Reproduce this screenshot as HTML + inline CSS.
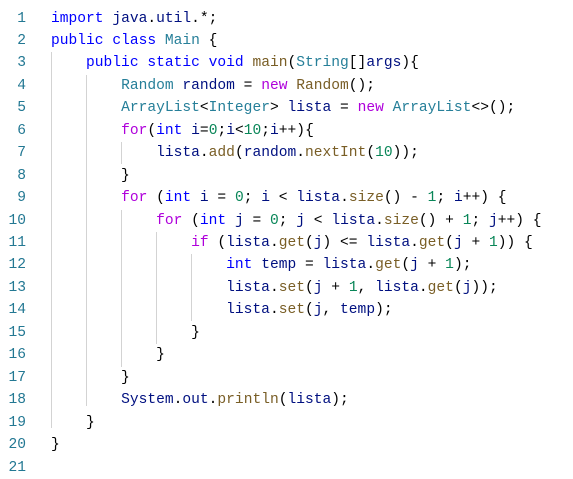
<!DOCTYPE html>
<html><head><style>
body{margin:0;background:#fff;width:573px;height:477px;overflow:hidden;font-family:"Liberation Mono",monospace;font-size:14.6px;}
.l{position:absolute;left:0;height:22.45px;line-height:22.45px;white-space:pre;}
.n{position:absolute;left:0;width:26px;text-align:right;color:#237893;}
.c{position:absolute;left:51px;color:#000;}
.k{color:#0000ff}.p{color:#af00db}.t{color:#267f99}.v{color:#001080}.f{color:#795e26}.d{color:#098658}
.g{position:absolute;width:1px;background:#d3d3d3;}
</style></head><body>
<div class="g" style="left:51px;top:52px;height:376px"></div>
<div class="g" style="left:86px;top:75px;height:331px"></div>
<div class="g" style="left:121px;top:142px;height:22px"></div>
<div class="g" style="left:121px;top:210px;height:157px"></div>
<div class="g" style="left:156px;top:232px;height:112px"></div>
<div class="g" style="left:191px;top:254px;height:67px"></div>
<div id="w"></div>
<script>
var L=[
'<span class="k">import</span> <span class="v">java</span>.<span class="v">util</span>.*;',
'<span class="k">public</span> <span class="k">class</span> <span class="t">Main</span> {',
'    <span class="k">public</span> <span class="k">static</span> <span class="k">void</span> <span class="f">main</span>(<span class="t">String</span>[]<span class="v">args</span>){',
'        <span class="t">Random</span> <span class="v">random</span> = <span class="p">new</span> <span class="f">Random</span>();',
'        <span class="t">ArrayList</span>&lt;<span class="t">Integer</span>&gt; <span class="v">lista</span> = <span class="p">new</span> <span class="t">ArrayList</span>&lt;&gt;();',
'        <span class="p">for</span>(<span class="k">int</span> <span class="v">i</span>=<span class="d">0</span>;<span class="v">i</span>&lt;<span class="d">10</span>;<span class="v">i</span>++){',
'            <span class="v">lista</span>.<span class="f">add</span>(<span class="v">random</span>.<span class="f">nextInt</span>(<span class="d">10</span>));',
'        }',
'        <span class="p">for</span> (<span class="k">int</span> <span class="v">i</span> = <span class="d">0</span>; <span class="v">i</span> &lt; <span class="v">lista</span>.<span class="f">size</span>() - <span class="d">1</span>; <span class="v">i</span>++) {',
'            <span class="p">for</span> (<span class="k">int</span> <span class="v">j</span> = <span class="d">0</span>; <span class="v">j</span> &lt; <span class="v">lista</span>.<span class="f">size</span>() + <span class="d">1</span>; <span class="v">j</span>++) {',
'                <span class="p">if</span> (<span class="v">lista</span>.<span class="f">get</span>(<span class="v">j</span>) &lt;= <span class="v">lista</span>.<span class="f">get</span>(<span class="v">j</span> + <span class="d">1</span>)) {',
'                    <span class="k">int</span> <span class="v">temp</span> = <span class="v">lista</span>.<span class="f">get</span>(<span class="v">j</span> + <span class="d">1</span>);',
'                    <span class="v">lista</span>.<span class="f">set</span>(<span class="v">j</span> + <span class="d">1</span>, <span class="v">lista</span>.<span class="f">get</span>(<span class="v">j</span>));',
'                    <span class="v">lista</span>.<span class="f">set</span>(<span class="v">j</span>, <span class="v">temp</span>);',
'                }',
'            }',
'        }',
'        <span class="v">System</span>.<span class="v">out</span>.<span class="f">println</span>(<span class="v">lista</span>);',
'    }',
'}',
''];
var h='';for(var i=0;i<L.length;i++){h+='<div class="l" style="top:'+(7.5+i*22.45)+'px"><span class="n">'+(i+1)+'</span><span class="c">'+L[i]+'</span></div>';}
document.getElementById('w').innerHTML=h;
</script>
</body></html>
